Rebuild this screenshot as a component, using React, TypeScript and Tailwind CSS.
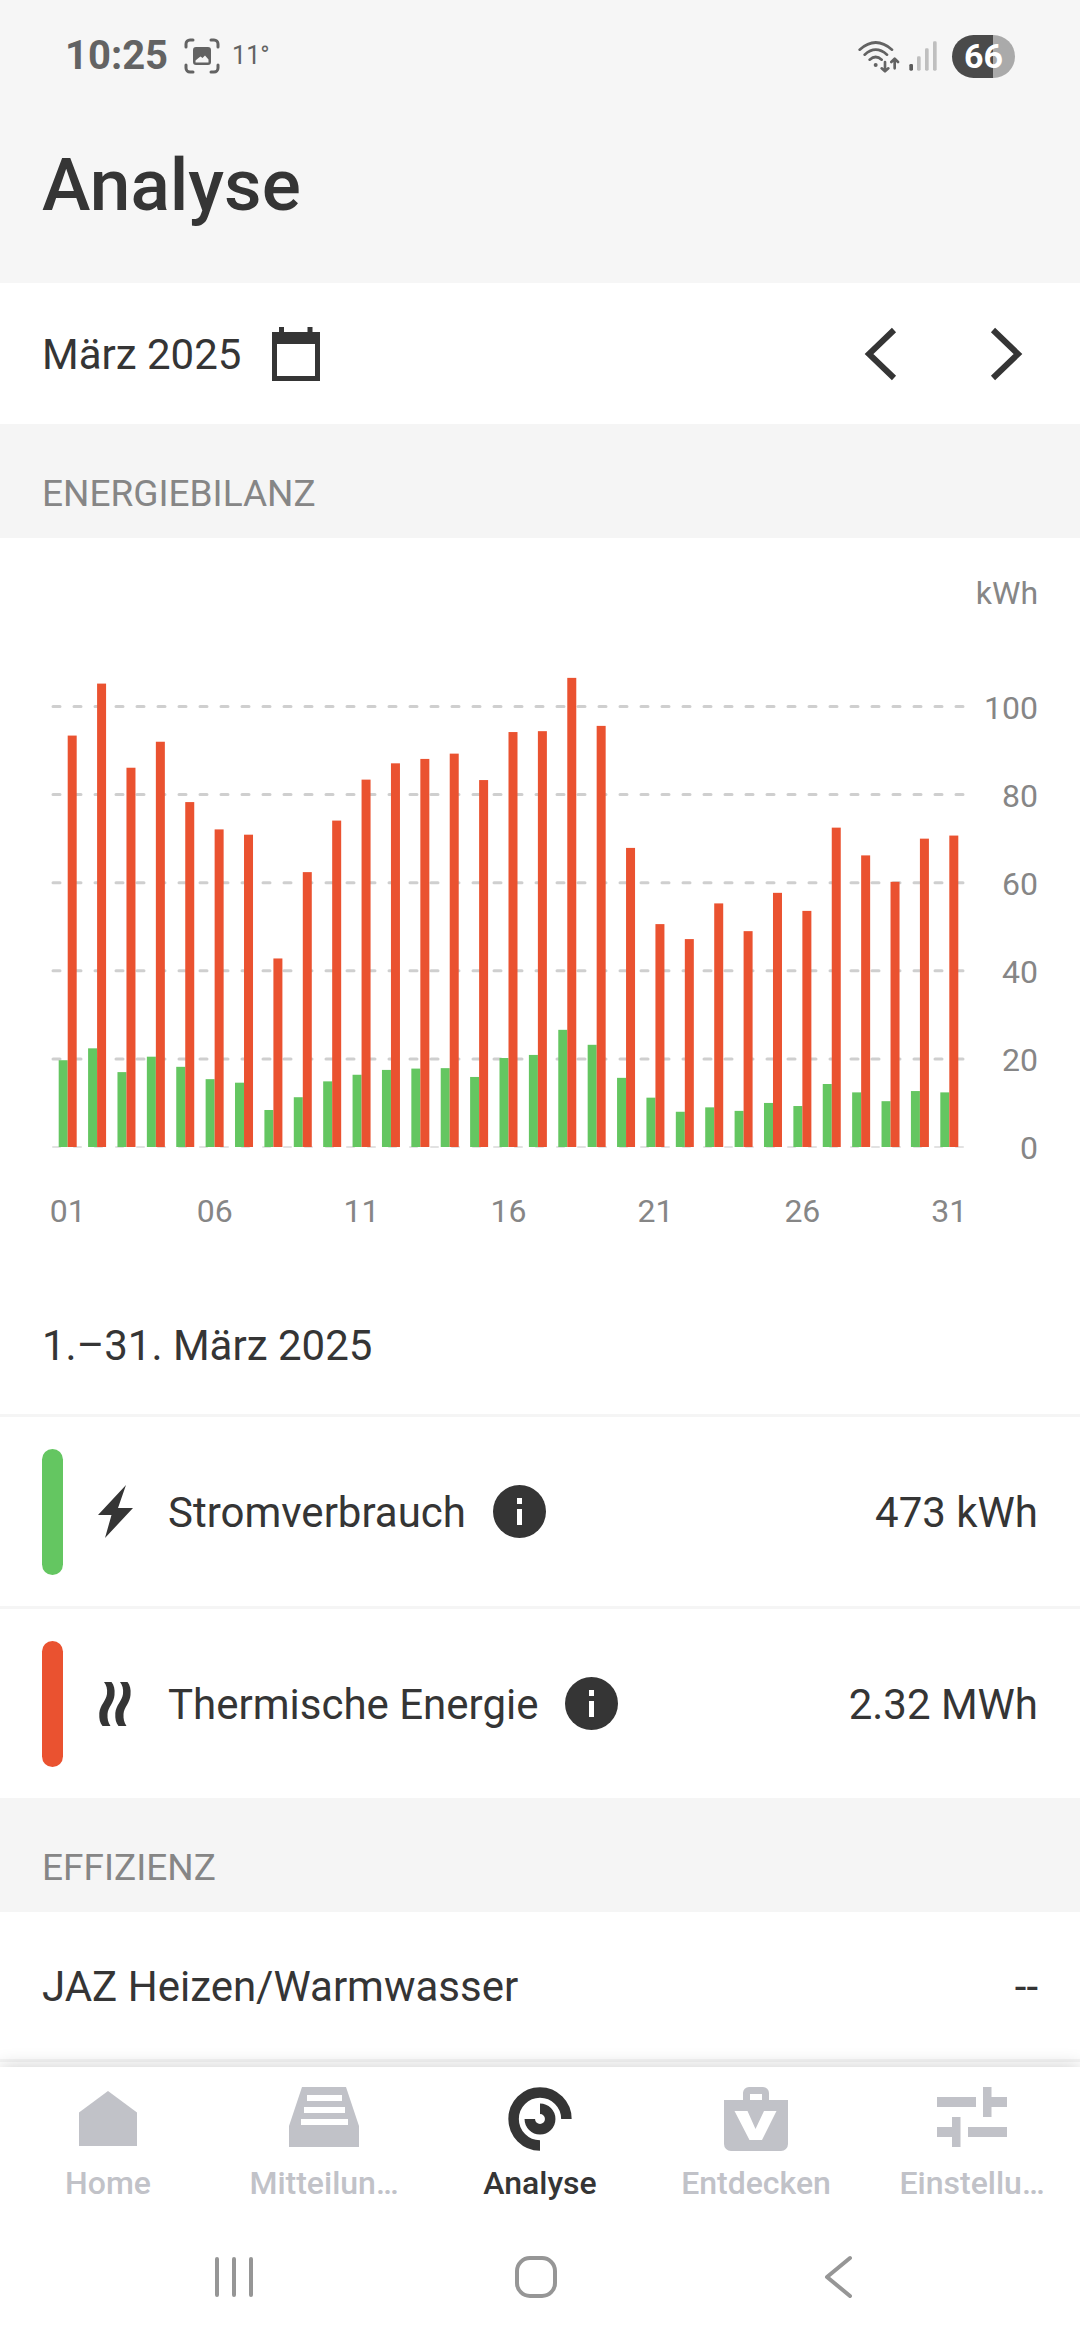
import type { ReactNode } from 'react'

// [day, Stromverbrauch, Thermische Energie] in kWh
const days: [string, number, number][] = [
  ['01', 19.7, 93.4], ['02', 22.4, 105.2], ['03', 17, 86.1], ['04', 20.5, 92],
  ['05', 18.2, 78.3], ['06', 15.4, 72.1], ['07', 14.6, 70.9], ['08', 8.4, 42.8],
  ['09', 11.3, 62.4], ['10', 14.9, 74.1], ['11', 16.4, 83.4], ['12', 17.5, 87.1],
  ['13', 17.8, 88.1], ['14', 17.9, 89.3], ['15', 15.9, 83.3], ['16', 20.2, 94.2],
  ['17', 20.9, 94.4], ['18', 26.6, 106.5], ['19', 23.2, 95.6], ['20', 15.7, 67.9],
  ['21', 11.2, 50.6], ['22', 8, 47.2], ['23', 9, 55.3], ['24', 8.2, 49],
  ['25', 10, 57.7], ['26', 9.3, 53.6], ['27', 14.3, 72.5], ['28', 12.4, 66.2],
  ['29', 10.4, 60.2], ['30', 12.7, 70], ['31', 12.4, 70.7],
]

const ticks = [0, 20, 40, 60, 80, 100]

const plot = { left: 53, right: 964, base: 609, perKwh: 4.405, bar: 9 }

function EnergyChart() {
  const step = (plot.right - plot.left) / days.length
  return (
    <svg viewBox="0 0 1080 762" className="block w-full" role="img" aria-label="Energiebilanz März 2025">
      <g className="fill-[#868686] text-[32px]">
        <text x={1038} y={66} textAnchor="end">kWh</text>
        {ticks.map((t) => (
          <text key={t} x={1038} y={plot.base - t * plot.perKwh + 12} textAnchor="end">{t}</text>
        ))}
        {days.filter((_, i) => i % 5 === 0).map(([day], i) => (
          <text key={day} x={plot.left + step * (i * 5 + 0.5)} y={684} textAnchor="middle">{day}</text>
        ))}
      </g>
      {ticks.map((t) => (
        <line
          key={t}
          x1={plot.left}
          x2={plot.right}
          y1={plot.base - t * plot.perKwh}
          y2={plot.base - t * plot.perKwh}
          stroke={t === 0 ? '#e2e2e2' : '#cfcfcf'}
          strokeWidth={t === 0 ? 2 : 3}
          strokeLinecap="round"
          strokeDasharray="7 14"
        />
      ))}
      {days.map(([day, power, heat], i) => {
        const mid = plot.left + step * (i + 0.5)
        return (
          <g key={day}>
            <rect x={mid - plot.bar} y={plot.base - power * plot.perKwh} width={plot.bar} height={power * plot.perKwh} fill="#64c661" />
            <rect x={mid} y={plot.base - heat * plot.perKwh} width={plot.bar} height={heat * plot.perKwh} fill="#ea5230" />
          </g>
        )
      })}
    </svg>
  )
}

function StatusBar() {
  return (
    <div className="flex h-28 items-center justify-between pl-[65px] pr-[65px] text-[#636363]">
      <div className="flex items-center">
        <span className="text-[40px] font-bold">10:25</span>
        <svg viewBox="0 0 36 36" className="ml-4 size-9" fill="none" stroke="currentColor" strokeWidth="3" strokeLinecap="round">
          <path d="M2 9V6a4 4 0 0 1 4-4h3M27 2h3a4 4 0 0 1 4 4v3M34 27v3a4 4 0 0 1-4 4h-3M9 34H6a4 4 0 0 1-4-4v-3" />
          <path
            fillRule="evenodd"
            fill="currentColor"
            stroke="none"
            d="M12 9h12a3 3 0 0 1 3 3v12a3 3 0 0 1-3 3H12a3 3 0 0 1-3-3V12a3 3 0 0 1 3-3zM11.500 24.500h13v-3l-3.500-4-2.500 2.500-2 -1.500-2 1.500-3 2.500z"
          />
        </svg>
        <span className="ml-3 text-[25px]">11°</span>
      </div>
      <div className="flex items-center">
        <svg viewBox="54 57 126 99" className="h-[33px] w-[42px]" fill="none" stroke="currentColor" strokeWidth="8" strokeLinecap="round" strokeLinejoin="round">
          <path d="M59 86Q107 43 156 86M74 101Q107 71 141 101M89 116Q107 100 125 116" />
          <circle cx="107" cy="132" r="6" fill="currentColor" stroke="none" />
          <path d="M135 123V150M125 142L135 151L145 142M164 142V114M154 123L164 113L174 123" />
        </svg>
        <svg viewBox="207 62 84 90" className="ml-[9px] h-[30px] w-7">
          <g fill="#bfbfbf">
            <rect x="231" y="108" width="11" height="43" rx="4" />
            <rect x="255" y="84" width="11" height="67" rx="4" />
            <rect x="279" y="63" width="11" height="88" rx="4" />
          </g>
          <rect x="208" y="131" width="11" height="20" rx="4" fill="#5a5a5a" />
        </svg>
        <span className="ml-[15px] flex h-[43px] w-[63px] items-center justify-center rounded-full bg-linear-to-r from-[#4a4a4a] from-65% to-[#aaaaaa] to-65% text-[34px] font-bold text-white">
          66
        </span>
      </div>
    </div>
  )
}

function SectionTitle({ children }: { children: ReactNode }) {
  return (
    <h2 className="px-[42px] pb-[22px] pt-12 text-[37px] leading-[44px] text-[#868686] uppercase">{children}</h2>
  )
}

function InfoButton({ label }: { label: string }) {
  return (
    <button type="button" aria-label={`Info zu ${label}`} className="ml-[27px]">
      <svg viewBox="0 0 53 53" className="size-[53px]">
        <circle cx="26.5" cy="26.5" r="26.5" fill="#353535" />
        <path d="M24 13h5v6h-5zM24 24h5v16h-5z" fill="#fff" />
      </svg>
    </button>
  )
}

type EnergyRowProps = { pill: string; icon: ReactNode; label: string; value: string }

function EnergyRow({ pill, icon, label, value }: EnergyRowProps) {
  return (
    <div className="flex h-48 items-center border-t-3 border-[#f5f5f5] px-[42px]">
      <span className={`h-[126px] w-[21px] rounded-full ${pill}`} />
      <span className="ml-[26px] flex w-[52px] justify-center">{icon}</span>
      <span className="ml-[27px] pt-[3px]">{label}</span>
      <InfoButton label={label} />
      <span className="ml-auto pt-[3px]">{value}</span>
    </div>
  )
}

const boltIcon = (
  <svg viewBox="0 0 35 53" className="h-[53px] w-[35px]" fill="#353535">
    <path d="M28 0L0 30H13.500L7 53L35 23H20z" />
  </svg>
)

const heatIcon = (
  <svg viewBox="0 0 32 44" className="h-11 w-8" fill="#353535">
    <path d="M5 0H12.500C15 3 16 7 15.500 13C15 21 9 25 8.500 32C8.300 37 9 40 11.500 44H3.500C1 41 0 37 .3 31C1 23 7 19 8 12C8.500 7 7.500 3 5 0z" />
    <path d="M21 0H28.500C31 3 32 7 31.500 13C31 21 25 25 24.500 32C24.300 37 25 40 27.500 44H19.500C17 41 16 37 16.300 31C17 23 23 19 24 12C24.500 7 23.500 3 21 0z" />
  </svg>
)

// every tab icon is drawn on the same 72x66 box
const tabs = [
  {
    label: 'Home',
    href: '#home',
    icon: <path d="M36 5L65 26.500V60H7V26.500z" />,
  },
  {
    label: 'Mitteilun…',
    href: '#mitteilungen',
    icon: (
      <path fillRule="evenodd" d="M14 1H58L71 40V61H1V40zM19 9V15H54V9zM16 21V27H57V21zM13 33V39H60V33z" />
    ),
  },
  {
    label: 'Analyse',
    href: '#analyse',
    icon: (
      <g fill="none" stroke="currentColor">
        <path strokeWidth="10.500" d="M62.400 33A26.400 26.400 0 1 0 36 59.400" />
        <path strokeWidth="10.500" d="M36 22.800A10.200 10.200 0 1 1 25.800 33" />
      </g>
    ),
  },
  {
    label: 'Entdecken',
    href: '#entdecken',
    icon: (
      <path
        fillRule="evenodd"
        d="M4 14H23V7a6 6 0 0 1 6-6H43a6 6 0 0 1 6 6V14H68V58a7 7 0 0 1-7 7H11a7 7 0 0 1-7-7zM30 8V14H42V8zM14.500 25L29.500 54H42L56.500 25H44L35.500 43L27.500 25z"
      />
    ),
  },
  {
    label: 'Einstellu…',
    href: '#einstellungen',
    icon: (
      <path d="M1 11H40V21H1zM47 1H55.500V11H71V21H55.500V31H47zM1 41H16V31H24.500V61H16V51H1zM32 41H71V51H32z" />
    ),
  },
]

function TabBar() {
  return (
    <nav className="grid grid-cols-5 pt-[19px]">
      {tabs.map((tab) => (
        <a
          key={tab.label}
          href={tab.href}
          className={`flex flex-col items-center ${tab.label === 'Analyse' ? 'text-[#353535]' : 'text-[#c1c2c8]'}`}
        >
          <svg viewBox="0 0 72 66" className="h-[66px] w-[72px]" fill="currentColor">{tab.icon}</svg>
          <span className="mt-[11px] text-[32px] leading-[40px] font-medium">{tab.label}</span>
        </a>
      ))}
    </nav>
  )
}

function SystemBar() {
  return (
    <div className="grid h-[137px] grid-cols-3 place-items-center pl-[83px] pr-[91px] pt-[11px] text-[#969696]">
      <button type="button" aria-label="Letzte Apps">
        <svg viewBox="0 0 44 44" className="size-11" fill="none" stroke="currentColor" strokeWidth="4" strokeLinecap="round">
          <path d="M5 4V40M22 4V40M39 4V40" />
        </svg>
      </button>
      <button type="button" aria-label="Startbildschirm">
        <svg viewBox="0 0 44 44" className="size-11" fill="none" stroke="currentColor" strokeWidth="4">
          <rect x="3" y="3" width="38" height="38" rx="13" />
        </svg>
      </button>
      <button type="button" aria-label="Zurück">
        <svg viewBox="0 0 44 44" className="size-11" fill="none" stroke="currentColor" strokeWidth="4" strokeLinecap="round" strokeLinejoin="round">
          <path d="M34 3L11 22L34 41" />
        </svg>
      </button>
    </div>
  )
}

export default function App() {
  return (
    <div className="flex min-h-screen flex-col bg-[#f5f5f5] font-['Roboto',sans-serif] text-[42px] leading-[50px] text-[#353535]">
      <header className="bg-[#f6f6f6]">
        <StatusBar />
        <h1 className="px-[42px] pb-[58px] pt-[33px] text-[73px] leading-[80px] font-medium">Analyse</h1>
      </header>

      <main className="flex flex-1 flex-col">
        <div className="flex h-[141px] items-center bg-white pl-[42px] pr-[49px]">
          <button type="button" className="flex items-center gap-[31px]">
            <span className="pt-[3px]">März 2025</span>
            <svg viewBox="0 0 48 54" className="h-[54px] w-12" fill="#353535">
              <path fillRule="evenodd" d="M0 5H7V0H12V5H35.500V0H40.500V5H48V54H0zM5 17V49H43V17z" />
            </svg>
          </button>
          <div className="ml-auto flex gap-[69px]">
            <button type="button" aria-label="Vorheriger Monat">
              <svg viewBox="0 0 53 54" className="h-[54px] w-[53px]" fill="none" stroke="#353535" strokeWidth="6">
                <path d="M38 3L13 27L38 51" />
              </svg>
            </button>
            <button type="button" aria-label="Nächster Monat">
              <svg viewBox="0 0 53 54" className="h-[54px] w-[53px]" fill="none" stroke="#353535" strokeWidth="6">
                <path d="M15 3L40 27L15 51" />
              </svg>
            </button>
          </div>
        </div>

        <SectionTitle>Energiebilanz</SectionTitle>
        <section className="bg-white">
          <EnergyChart />
          <p className="px-[42px] pb-[43px] pt-[21px]">1.–31. März 2025</p>
          <EnergyRow pill="bg-[#64c661]" icon={boltIcon} label="Stromverbrauch" value="473 kWh" />
          <EnergyRow pill="bg-[#ea5230]" icon={heatIcon} label="Thermische Energie" value="2.32 MWh" />
        </section>

        <SectionTitle>Effizienz</SectionTitle>
        <section className="flex-1 bg-white">
          <div className="flex h-[150px] items-center justify-between border-b-3 border-[#f5f5f5] px-[42px]">
            <span className="pt-[3px]">JAZ Heizen/Warmwasser</span>
            <span className="pt-[3px]">--</span>
          </div>
        </section>
      </main>

      <footer className="sticky bottom-0 bg-white shadow-[0_0_18px_rgba(0,0,0,0.2)]">
        <TabBar />
        <SystemBar />
      </footer>
    </div>
  )
}
